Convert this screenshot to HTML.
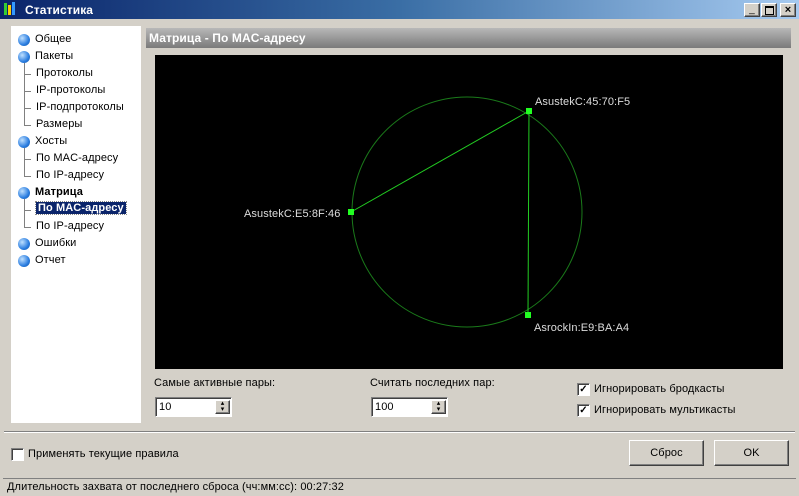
<!DOCTYPE html>
<html><head><meta charset="utf-8"><style>
body{margin:0;width:799px;height:496px;background:#d4d0c8;font-family:"Liberation Sans",sans-serif;font-size:11px;letter-spacing:0.1px;position:relative;overflow:hidden;color:#000}
.a{position:absolute}
.title{left:0;top:0;width:799px;height:19px;background:linear-gradient(90deg,#0a246a,#3a6ea5 50%,#a6caf0);color:#fff;font-weight:bold;font-size:12px}
.btn{background:#d4d0c8;border:1px solid;border-color:#fff #404040 #404040 #fff;box-shadow:inset -1px -1px #808080}
.tree{left:11px;top:26px;width:130px;height:397px;background:#fff}
.it{position:absolute;white-space:nowrap}
.ball{position:absolute;width:12px;height:12px;border-radius:50%;background:radial-gradient(circle at 35% 35%,#bfe0ff,#2a7de0 60%,#1050a0)}
.line{position:absolute;border-left:1px solid #808080}
.h{position:absolute;border-top:1px solid #808080;width:7px}
.spin{background:#fff;border:1px solid;border-color:#808080 #fff #fff #808080;box-shadow:inset 1px 1px #404040;height:18px}
.cb{width:11px;height:11px;background:#fff;border:1px solid;border-color:#808080 #fff #fff #808080;box-shadow:inset 1px 1px #404040;font-size:10px;line-height:11px;text-align:center;font-weight:bold}
</style></head><body>
<div class="a title"><span class="a" style="left:4px;top:3px;width:3px;height:12px;background:#3c3"></span><span class="a" style="left:8px;top:5px;width:3px;height:10px;background:#fc0"></span><span class="a" style="left:12px;top:2px;width:3px;height:13px;background:#39f"></span><span class="a" style="left:25px;top:3px">Статистика</span></div>
<div class="a btn" style="left:744px;top:3px;width:14px;height:12px;font-size:10px;text-align:center;line-height:12px">_</div>
<div class="a btn" style="left:761px;top:3px;width:14px;height:12px"><div class="a" style="left:3px;top:2px;width:7px;height:6px;border:1px solid #000;border-top-width:2px"></div></div>
<div class="a btn" style="left:780px;top:3px;width:14px;height:12px;font-size:11px;text-align:center;line-height:12px;font-weight:bold">×</div>

<div class="a tree"><div class="a" style="left:0;top:2px;width:130px">
<div class="ball" style="left:7px;top:6px"></div><div class="it" style="left:24px;top:5px">Общее</div>
<div class="ball" style="left:7px;top:23px"></div><div class="it" style="left:24px;top:22px">Пакеты</div>
<div class="line" style="left:13px;top:35px;height:62px"></div>
<div class="h" style="left:13px;top:46px"></div><div class="it" style="left:25px;top:39px">Протоколы</div>
<div class="h" style="left:13px;top:63px"></div><div class="it" style="left:25px;top:56px">IP-протоколы</div>
<div class="h" style="left:13px;top:80px"></div><div class="it" style="left:25px;top:73px">IP-подпротоколы</div>
<div class="h" style="left:13px;top:97px"></div><div class="it" style="left:25px;top:90px">Размеры</div>
<div class="ball" style="left:7px;top:108px"></div><div class="it" style="left:24px;top:107px">Хосты</div>
<div class="line" style="left:13px;top:120px;height:28px"></div>
<div class="h" style="left:13px;top:131px"></div><div class="it" style="left:25px;top:124px">По MAC-адресу</div>
<div class="h" style="left:13px;top:148px"></div><div class="it" style="left:25px;top:141px">По IP-адресу</div>
<div class="ball" style="left:7px;top:159px"></div><div class="it" style="left:24px;top:158px;font-weight:bold">Матрица</div>
<div class="line" style="left:13px;top:171px;height:28px"></div>
<div class="h" style="left:13px;top:182px"></div><div class="it" style="left:25px;top:174px;background:#0a246a;color:#fff;font-weight:bold;padding:0 2px;outline:1px dotted #888">По MAC-адресу</div>
<div class="h" style="left:13px;top:199px"></div><div class="it" style="left:25px;top:192px">По IP-адресу</div>
<div class="ball" style="left:7px;top:210px"></div><div class="it" style="left:24px;top:209px">Ошибки</div>
<div class="ball" style="left:7px;top:227px"></div><div class="it" style="left:24px;top:226px">Отчет</div>
</div></div>

<div class="a" style="left:146px;top:28px;width:645px;height:20px;background:linear-gradient(#b8b8b8,#7a7a7a);color:#fff;font-weight:bold;font-size:12px"><span class="a" style="left:3px;top:3px">Матрица - По MAC-адресу</span></div>
<svg class="a" style="left:155px;top:55px" width="628" height="314">
<rect width="628" height="314" fill="#000"/>
<circle cx="312" cy="157" r="115" fill="none" stroke="#1a7a1a" stroke-width="1"/>
<line x1="374" y1="56" x2="196" y2="157" stroke="#22cc22"/>
<line x1="374" y1="56" x2="373" y2="260" stroke="#22cc22"/>
<rect x="371" y="53" width="6" height="6" fill="#2f2"/>
<rect x="193" y="154" width="6" height="6" fill="#2f2"/>
<rect x="370" y="257" width="6" height="6" fill="#2f2"/>
<g fill="#ddd" font-family="Liberation Sans" font-size="11"><text x="380" y="50">AsustekC:45:70:F5</text><text x="89" y="162">AsustekC:E5:8F:46</text><text x="379" y="276">AsrockIn:E9:BA:A4</text></g>
</svg>
<div class="a" style="left:154px;top:377px">Самые активные пары:</div>
<div class="a spin" style="left:155px;top:397px;width:75px"><span class="a" style="left:3px;top:3px">10</span><div class="a btn" style="left:59px;top:2px;width:13px;height:12px;font-size:7px;line-height:6px;text-align:center">▴<br>▾</div></div>
<div class="a" style="left:370px;top:377px">Считать последних пар:</div>
<div class="a spin" style="left:371px;top:397px;width:75px"><span class="a" style="left:3px;top:3px">100</span><div class="a btn" style="left:59px;top:2px;width:13px;height:12px;font-size:7px;line-height:6px;text-align:center">▴<br>▾</div></div>
<div class="a cb" style="left:577px;top:383px">✓</div><div class="a" style="left:594px;top:383px">Игнорировать бродкасты</div>
<div class="a cb" style="left:577px;top:404px">✓</div><div class="a" style="left:594px;top:404px">Игнорировать мультикасты</div>
<div class="a" style="left:4px;top:431px;width:791px;border-top:1px solid #808080;border-bottom:1px solid #fff"></div>
<div class="a cb" style="left:11px;top:448px"></div><div class="a" style="left:28px;top:448px">Применять текущие правила</div>
<div class="a btn" style="left:629px;top:440px;width:73px;height:24px;text-align:center;line-height:24px">Сброс</div>
<div class="a btn" style="left:714px;top:440px;width:73px;height:24px;text-align:center;line-height:24px">OK</div>
<div class="a" style="left:3px;top:478px;width:793px;height:17px;border-top:1px solid #808080"><span class="a" style="left:4px;top:2px">Длительность захвата от последнего сброса (чч:мм:сс): 00:27:32</span></div>
</body></html>
